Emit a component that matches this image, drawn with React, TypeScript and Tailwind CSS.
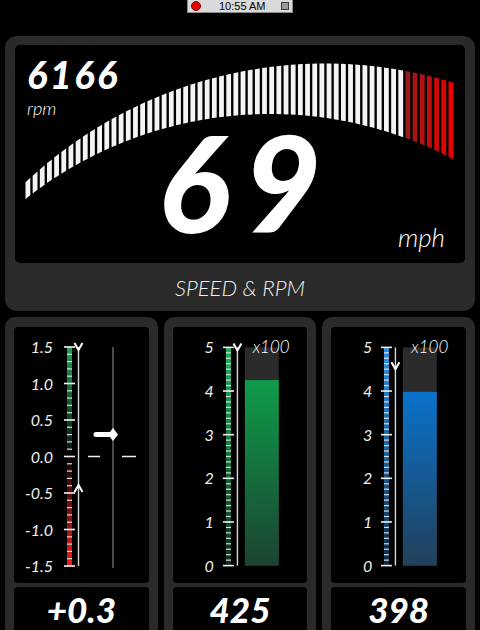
import React from "react";

const heavy = "font-['Lato','Open_Sans',sans-serif] font-black italic";
const light = "font-['Lato','Open_Sans',sans-serif] font-light italic";

// rpm arc geometry (coords inside the black speed box)
const topY = (x: number) => 455.9 - Math.sqrt(437.4 ** 2 - (x - 310.2) ** 2);
const botY = (x: number) => 463.3 - Math.sqrt(394.3 ** 2 - (x - 255) ** 2);
const BAR_COUNT = 60;
const RED_FROM = 53;

function barColor(i: number) {
  if (i < RED_FROM) return "#f4f4f4";
  const t = (i - RED_FROM) / (BAR_COUNT - 1 - RED_FROM);
  const r = Math.round(150 + t * 85);
  const g = Math.round(26 - t * 26);
  return `rgb(${r},${g},${g})`;
}

function RpmArc() {
  const bars = Array.from({ length: BAR_COUNT }, (_, i) => {
    const x0 = 10.5 + i * 7.17;
    const x1 = x0 + 4.8;
    return (
      <polygon
        key={i}
        points={`${x0},${topY(x0)} ${x1},${topY(x1)} ${x1},${botY(x1)} ${x0},${botY(x0)}`}
        fill={barColor(i)}
      />
    );
  });
  return (
    <svg className="absolute inset-0" width="450" height="218" viewBox="0 0 450 218">
      {bars}
    </svg>
  );
}

function StatusBar() {
  return (
    <div className="flex h-[13px] justify-center">
      <div className="flex h-[13px] w-[106px] items-center border border-t-0 border-[#8a8a8a] bg-[#dadada] px-[3px]">
        <span className="h-[10px] w-[10px] rounded-full border border-[#7a0000] bg-[#e30000]" />
        <span className="ml-[18px] font-['Liberation_Sans',Arial,sans-serif] text-[11px] leading-none text-black">
          10:55 AM
        </span>
        <span className="ml-auto h-[8px] w-[8px] border border-[#3a3a3a] bg-[#9a9a9a]" />
      </div>
    </div>
  );
}

function SpeedPanel() {
  return (
    <div className="mx-[5px] mt-[23px] rounded-[12px] bg-[#2a2a2a] px-[10px] pt-[9px]">
      <div className="relative h-[218px] overflow-hidden rounded-[5px] bg-black">
        <RpmArc />
        <div className="absolute left-[12px] top-[10px] flex flex-col text-white">
          <span className={`${heavy} text-[38px] leading-none tracking-[2.5px]`}>6166</span>
          <span className={`${light} mt-[6px] text-[18px] leading-none`}>rpm</span>
        </div>
        <div className={`${heavy} absolute left-[143px] top-[70px] text-[134px] leading-none tracking-[14px] text-white`}>
          69
        </div>
        <div className={`${light} absolute right-[20px] top-[179px] text-[26px] leading-none text-white`}>mph</div>
      </div>
      <div className={`${light} flex h-[48px] items-center justify-center text-[22px] text-[#f0f0f0]`}>
        SPEED &amp; RPM
      </div>
    </div>
  );
}

type StripProps = { x: number; count: number; major: number; grad: string };

// colored tick column, top at y=20 and bottom at y=239
function Strip({ x, count, major, grad }: StripProps) {
  const ticks = Array.from({ length: count + 1 }, (_, i) => {
    const y = 20 + (219 * i) / count;
    const isMajor = i % major === 0;
    return (
      <rect
        key={i}
        x={isMajor ? x - 3 : x}
        y={y - (isMajor ? 0.8 : 0.6)}
        width={isMajor ? 11 : 5}
        height={isMajor ? 1.6 : 1.2}
        fill={isMajor ? "#f4f4f4" : "#dedede"}
      />
    );
  });
  return (
    <g>
      <rect x={x} y={20} width={5} height={219} fill={`url(#${grad})`} />
      {ticks}
    </g>
  );
}

function Labels({ items, width }: { items: string[]; width: string }) {
  return (
    <div className={`flex shrink-0 flex-col justify-between pb-[8px] pt-[11px] text-right font-['Lato','Open_Sans',sans-serif] text-[16px] font-normal italic leading-[18px] text-[#f0f0f0] ${width}`}>
      {items.map((t) => (
        <span key={t}>{t}</span>
      ))}
    </div>
  );
}

function Panel({ value, children }: { value: string; children: React.ReactNode }) {
  return (
    <div className="rounded-t-[10px] bg-[#2a2a2a] px-[9px] pt-[10px]">
      <div className="relative flex h-[256px] rounded-[4px] bg-black">{children}</div>
      <div className={`${heavy} mt-[4px] flex h-[43px] items-start justify-center rounded-t-[4px] bg-black pt-[5px]`}>
        <span className="text-[35px] leading-[34px] text-white">{value}</span>
      </div>
    </div>
  );
}

function TrimGauge() {
  const y = (v: number) => 129.5 - v * 73;
  const p = y(0.3);
  return (
    <Panel value="+0.3">
      <Labels width="w-[39px]" items={["1.5", "1.0", "0.5", "0.0", "-0.5", "-1.0", "-1.5"]} />
      <svg width="94" height="256" viewBox="0 0 94 256">
        <defs>
          <linearGradient id="trim" x1="0" y1="0" x2="0" y2="1">
            <stop offset="0" stopColor="#22a055" />
            <stop offset="0.45" stopColor="#0a2414" />
            <stop offset="0.5" stopColor="#000" />
            <stop offset="0.55" stopColor="#2a0606" />
            <stop offset="1" stopColor="#f01c1c" />
          </linearGradient>
        </defs>
        <Strip x={14} count={30} major={5} grad="trim" />
        <line x1={25.5} y1={20} x2={25.5} y2={239} stroke="#d8d8d8" strokeWidth={1.4} />
        <polyline points="21.5,16 25.5,23 29.5,16" fill="none" stroke="#fff" strokeWidth={2} />
        <polyline points="21.5,165 25.5,158 29.5,165" fill="none" stroke="#fff" strokeWidth={2} />
        <line x1={60} y1={20} x2={60} y2={241} stroke="#4a4a4a" strokeWidth={2} />
        <line x1={35} y1={y(0)} x2={47} y2={y(0)} stroke="#f0f0f0" strokeWidth={1.5} />
        <line x1={69} y1={y(0)} x2={83} y2={y(0)} stroke="#f0f0f0" strokeWidth={1.5} />
        <line x1={43} y1={p} x2={60} y2={p} stroke="#fff" strokeWidth={5} strokeLinecap="round" />
        <polygon points={`60,${p - 6.5} 65,${p} 60,${p + 6.5} 55,${p}`} fill="#fff" />
      </svg>
    </Panel>
  );
}

type BarProps = { value: string; level: number; grad: string; c1: string; c2: string; s1: string; s2: string; peak: number };

function BarGauge({ value, level, grad, c1, c2, s1, s2, peak }: BarProps) {
  const y = (v: number) => 239 - v * 43.8;
  const fillTop = y(level);
  const pk = y(peak);
  return (
    <Panel value={value}>
      <Labels width="w-[41px]" items={["5", "4", "3", "2", "1", "0"]} />
      <svg width="94" height="256" viewBox="0 0 94 256">
        <defs>
          <linearGradient id={`s-${grad}`} x1="0" y1="0" x2="0" y2="1">
            <stop offset="0" stopColor={s1} />
            <stop offset="1" stopColor={s2} />
          </linearGradient>
          <linearGradient id={`b-${grad}`} x1="0" y1="0" x2="0" y2="1">
            <stop offset="0" stopColor={c1} />
            <stop offset="1" stopColor={c2} />
          </linearGradient>
        </defs>
        <Strip x={12} count={40} major={8} grad={`s-${grad}`} />
        <line x1={23.5} y1={20} x2={23.5} y2={239} stroke="#d8d8d8" strokeWidth={1.4} />
        <polyline points={`19.5,${pk - 7} 23.5,${pk} 27.5,${pk - 7}`} fill="none" stroke="#fff" strokeWidth={2} />
        <rect x={31} y={20} width={34} height={219} fill="#2b2b2b" />
        <rect x={31} y={fillTop} width={34} height={239 - fillTop} fill={`url(#b-${grad})`} />
      </svg>
      <span className={`${light} absolute left-[80px] top-[11px] text-[17px] leading-[18px] text-white`}>x100</span>
    </Panel>
  );
}

export default function App() {
  return (
    <div className="h-[630px] w-[480px] overflow-hidden bg-black">
      <StatusBar />
      <SpeedPanel />
      <div className="mx-[5px] mt-[6px] grid grid-cols-3 gap-[6px]">
        <TrimGauge />
        <BarGauge value="425" level={4.25} peak={4.93} grad="g" c1="#0f9c4a" c2="#1b4330" s1="#1fb05e" s2="#0b2e1b" />
        <BarGauge value="398" level={3.98} peak={4.5} grad="b" c1="#0a72cc" c2="#22405a" s1="#2e8fe0" s2="#0d2a45" />
      </div>
    </div>
  );
}
